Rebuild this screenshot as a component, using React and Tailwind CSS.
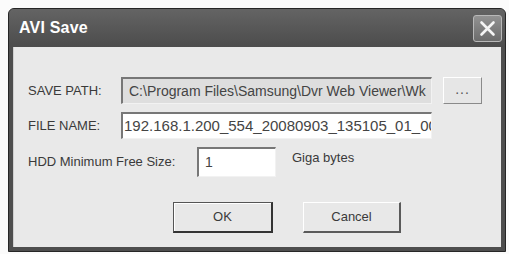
import React from "react";

const font = { fontFamily: '"Liberation Sans", Arial, sans-serif' };

export default function App() {
  return (
    <div className="w-[509px] h-[254px] bg-[#fbfbfb] overflow-hidden" style={font}>
      <div className="ml-[8px] pt-[8px]">
        <div className="w-[498px] h-[244px] bg-[#4e4e4e] border border-[#262626] rounded-t-[6px] flex flex-col px-[4px] pb-[4px]">
          <div className="h-[38px] flex items-center justify-between -mx-[4px] pl-[10px] pr-[3px] bg-gradient-to-b from-[#646464] to-[#4c4c4c] rounded-t-[5px]">
            <span className="text-white font-bold text-[16px] leading-none tracking-[0.2px]">AVI Save</span>
            <div className="w-[29px] h-[27px] rounded-[3px] border border-[#b8b8b8] bg-gradient-to-b from-[#929292] to-[#6c6c6c] flex items-center justify-center">
              <svg width="17" height="17" viewBox="0 0 17 17">
                <path d="M2.5 2.5 L14.5 14.5 M14.5 2.5 L2.5 14.5" stroke="#f4f4f4" strokeWidth="2.6" strokeLinecap="round" />
              </svg>
            </div>
          </div>
          <div className="flex-1 bg-[#e9e9e9] border-l border-[#cfcfcf] flex flex-col pt-[30px] text-[13px] text-[#3a3a3a]">
            <div className="flex items-center h-[27px] pl-[14px]">
              <span className="w-[93px]">SAVE PATH:</span>
              <div className="w-[311px] h-[27px] bg-[#dedede] border-t-2 border-l-2 border-[#777777] border-b border-r border-b-[#f2f2f2] border-r-[#f2f2f2] flex items-center pl-[6px] overflow-hidden whitespace-nowrap text-[14px] text-[#444]">
                C:\Program Files\Samsung\Dvr Web Viewer\Wk
              </div>
              <div className="ml-[11px] w-[39px] h-[27px] bg-[#e6e6e6] border border-t-white border-l-white border-b-[#8a8a8a] border-r-[#8a8a8a] flex items-center justify-center text-[14px] text-[#555] leading-none pb-[4px] tracking-[1px]">
                ...
              </div>
            </div>
            <div className="flex items-center h-[27px] pl-[14px] mt-[8px]">
              <span className="w-[93px]">FILE NAME:</span>
              <div className="w-[311px] h-[27px] bg-white border-t-2 border-l-2 border-[#777777] border-b border-r border-b-[#f2f2f2] border-r-[#f2f2f2] flex items-center pl-[1px] overflow-hidden whitespace-nowrap text-[15px] text-[#444]">
                192.168.1.200_554_20080903_135105_01_00
              </div>
            </div>
            <div className="flex items-center h-[30px] pl-[14px] mt-[8px]">
              <span className="w-[169px]">HDD Minimum Free Size:</span>
              <div className="w-[79px] h-[30px] bg-white border-t-2 border-l-2 border-[#777777] border-b border-r border-b-[#f2f2f2] border-r-[#f2f2f2] flex items-center pl-[6px] text-[14px] text-[#444]">
                1
              </div>
              <span className="ml-[16px] -mt-[8px]">Giga bytes</span>
            </div>
            <div className="flex items-center mt-[25px] pl-[159px]">
              <div className="w-[100px] h-[31px] bg-[#e8e8e8] border border-[#555] border-b-2 border-r-2 border-b-[#333] border-r-[#333] shadow-[inset_1px_1px_0_#ffffff] flex items-center justify-center">
                OK
              </div>
              <div className="ml-[30px] w-[98px] h-[31px] bg-[#e8e8e8] border border-t-white border-l-white border-b-2 border-r-2 border-b-[#5a5a5a] border-r-[#5a5a5a] flex items-center justify-center">
                Cancel
              </div>
            </div>
          </div>
        </div>
      </div>
    </div>
  );
}
